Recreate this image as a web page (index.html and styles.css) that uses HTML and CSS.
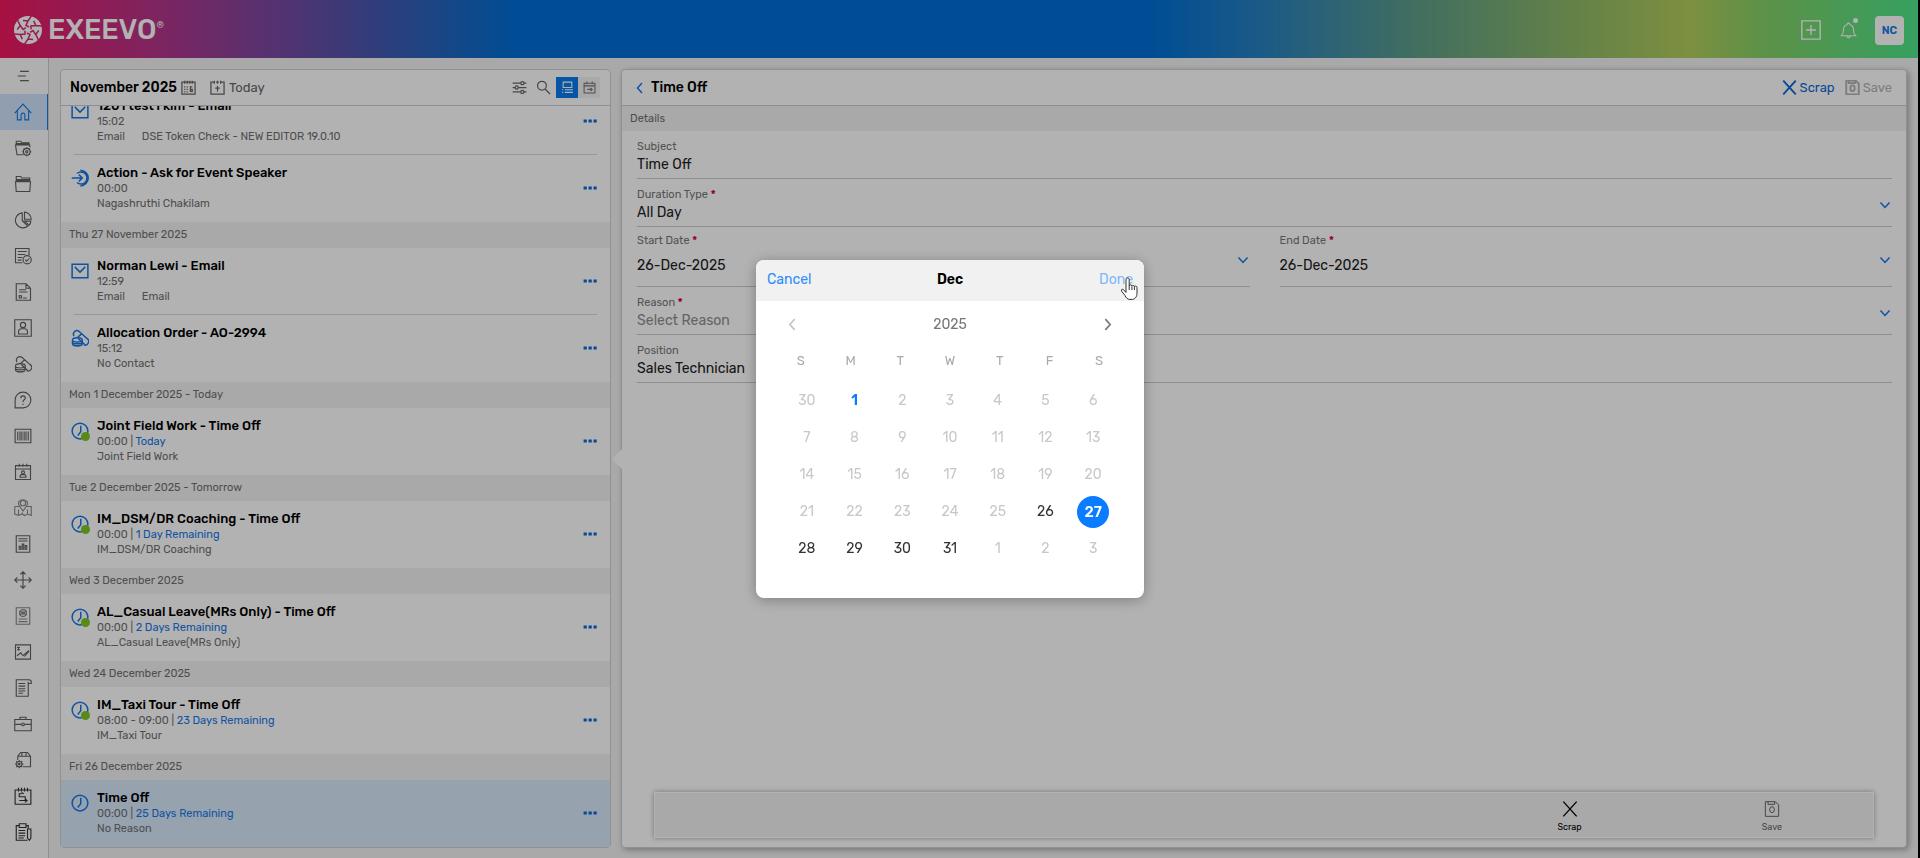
FILE: index.html
```html
<!DOCTYPE html>
<html lang="en">
<head>
    <meta charset="UTF-8">
    <meta name="viewport" content="width=device-width, initial-scale=1.0">
    <title>Exeevo - Time Off</title>
    <link rel="stylesheet" href="styles.css">
</head>
<body>
    <!-- icon set -->
    <svg class="sprite" aria-hidden="true">
        <symbol id="i-menu" viewBox="0 0 24 24"><path d="M7 4h15M3 12h14M7 20h15"/></symbol>
        <symbol id="i-home" viewBox="0 0 24 24"><path d="M1 13.500 12 1.500l11 12M4.500 10v12.500h5V16a2.500 2.500 0 0 1 5 0v6.500h5V10"/></symbol>
        <symbol id="i-folder-gear" viewBox="0 0 24 24"><path d="M12 21H4L2 8h19v3M3 8V3h6l1.500 2H20v3M3 6h17M3 7h17"/><circle cx="17" cy="17" r="4.500"/><circle cx="17" cy="17" r="1.500"/><path d="M17 11v2M17 21v2M11 17h2M21 17h2M12.800 12.800l1.400 1.400M19.800 19.800l1.400 1.400M12.800 21.200l1.400-1.400M19.800 14.200l1.400-1.400"/></symbol>
        <symbol id="i-folder" viewBox="0 0 24 24"><path d="M2 9h20l-1 13H3zM3 9V2h6l1.500 2H21v5M3 6h18M3 7.500h18"/></symbol>
        <symbol id="i-pie" viewBox="0 0 24 24"><path d="M11 2.500A10 10 0 1 0 18.500 20L11 13z"/><path d="M14 1.500V11h9A9.500 9.500 0 0 0 14 1.500zM14 13.500h8.500a9 9 0 0 1-2.500 5.500z"/></symbol>
        <symbol id="i-list-check" viewBox="0 0 24 24"><path d="M11 21H2V2h18v9M5 6h12M5 10h10M5 14h6M5 17.500h5"/><circle cx="17.500" cy="17" r="5.500"/><path d="m15 17 2 2 3.500-4"/></symbol>
        <symbol id="i-doc-sign" viewBox="0 0 24 24"><path d="M3 1h13l6 6v16H3zM16 1v6h6M7 9h9M7 12h11M7 16v4h3v-3H7M12 20h5"/></symbol>
        <symbol id="i-contact" viewBox="0 0 24 24"><path d="M1 1h22v22H1zM6 20v-3a4 4 0 0 1 4-4h4a4 4 0 0 1 4 4v3z"/><circle cx="12" cy="8" r="3.500"/></symbol>
        <symbol id="i-pills" viewBox="0 0 24 24"><path d="m10 13 8.500 8M4 9.500A4.700 4.700 0 0 1 10.500 3L21 12.500A4.700 4.700 0 0 1 17 21M8 12l6-5.500"/><path d="M2 14.500c0-4 13-4 13 0v5c0 4-13 4-13 0zM2 15c0 3 13 3 13 0M2 17.500c0 3 13 3 13 0M2 20c0 3 13 3 13 0"/></symbol>
        <symbol id="i-help" viewBox="0 0 24 24"><path d="M1.500 22.500V12A10.500 10.500 0 1 1 12 22.500zM9 9.500c0-4 6-4 6 0 0 2.200-3 2.300-3 5M12 17v1.500"/></symbol>
        <symbol id="i-barcode" viewBox="0 0 24 24"><path d="M1.500 3h21v18h-21zM5 6v12M8 6v12M10.500 6v12M13.500 6v12M16 6v12M19 6v12"/></symbol>
        <symbol id="i-cal-user" viewBox="0 0 24 24"><path d="M2 3.500h20V22H2zM2 8h20M7 1v4M12 1v4M17 1v4M8 19v-1a2.500 2.500 0 0 1 2.500-2.500h3A2.500 2.500 0 0 1 16 18v1z"/><circle cx="12" cy="12.500" r="2"/></symbol>
        <symbol id="i-map-user" viewBox="0 0 24 24"><circle cx="12" cy="5.500" r="3.500"/><path d="M7 9c-3-5 1-8 5-8s8 3 5 8l-5 7zM1 10h6M1 10v10l5 2 5-2 3 2 4-2 5 2V10h-6M6 14v8M11 18v3M18 14v6"/></symbol>
        <symbol id="i-report" viewBox="0 0 24 24"><path d="M3 1h18v22H3zM6 5h12M6 8h12M7 20v-5h2v5M11 20v-8h2v8M15 20v-6h2v6"/></symbol>
        <symbol id="i-move" viewBox="0 0 24 24"><path d="M12 1v22M1 12h22M8.500 4.500 12 1l3.500 3.500M8.500 19.500 12 23l3.500-3.500M4.500 8.500 1 12l3.500 3.500M19.500 8.500 23 12l-3.500 3.500"/></symbol>
        <symbol id="i-atom-doc" viewBox="0 0 24 24"><path d="M3 1h18v22H3zM6 16h12M6 19.500h12"/><circle cx="12" cy="8" r="4.500"/><circle cx="12" cy="8" r="1.500"/><path d="M7 5.500l10 5M7 10.500l10-5"/></symbol>
        <symbol id="i-chart" viewBox="0 0 24 24"><path d="M2 2.500h20v19H2zM4 6h4M4 9h4M6 5v5M4 17l5-4 3 4 8-7M14 18l6-7"/></symbol>
        <symbol id="i-scroll" viewBox="0 0 24 24"><path d="M3 1h17a3 3 0 0 1 3 3v2h-4v17H3zM19 6V3.500M6 6h9M6 9.500h9M6 13h9M6 16h9M6 19h6"/></symbol>
        <symbol id="i-case" viewBox="0 0 24 24"><path d="M1 6h22v15H1zM8 6V3h8v3M1 12.500h9M14 12.500h9"/><circle cx="12" cy="12.500" r="1.800"/></symbol>
        <symbol id="i-box-gear" viewBox="0 0 24 24"><path d="M5 12V7l4-5h9l4 5v14H12M5 7h17M10.500 2v5M16 2v5"/><circle cx="7" cy="17.500" r="3.500"/><circle cx="7" cy="17.500" r="1"/><path d="M7 12v2M7 21v2M1.500 17.500h2M10.500 17.500h2M3 13.500l1.500 1.500M9.500 20l1.500 1.500M3 21.500 4.500 20M9.500 15l1.500-1.500"/></symbol>
        <symbol id="i-cal-route" viewBox="0 0 24 24"><path d="M1.500 4h21v19h-21zM6 1v5M10 1v5M14 1v5M18 1v5M10 9H7v4h8v5H9M13 9l-3-1.500M7 18h10M14.500 15.500l3 2.500-3 2.500"/></symbol>
        <symbol id="i-clip" viewBox="0 0 24 24"><path d="M7 3.500H3V23h15M16 3.500h3V7M7 1h9v5H7zM6 10h9M6 13.500h9M6 17h9M6 20h7M18 8h4.500v12l-2 3-2.500-3z"/></symbol>
        <symbol id="i-mail" viewBox="0 0 24 24"><path d="M1.500 3h21v18h-21zM5 6.500l7 7 7-7"/></symbol>
        <symbol id="i-enter" viewBox="0 0 24 24"><path d="M1 12h14M10.500 7.500l4.500 4.500-4.500 4.500M8 6a8 8 0 1 1 0 12M12.500 1.500a10.500 10.500 0 0 1 0 21"/></symbol>
        <symbol id="i-clock" viewBox="0 0 24 24"><circle cx="12" cy="12" r="10.500"/><path d="M13 5v8l-4 5"/></symbol>
        <symbol id="i-dots" viewBox="0 0 24 24"><path d="M1 9.500h5.500v5H1zM9.500 9.500H15v5H9.500zM18 9.500h5.500v5H18z"/></symbol>
        <symbol id="i-cal" viewBox="0 0 24 24"><path d="M1.500 3.500h21v19h-21zM6 1v5M10 1v5M14 1v5M18 1v5M5 11h2M9 11h2M5 15h2M9 15h2M5 19h2M9 19h2M18 11h-3v7h3v-3h-3"/></symbol>
        <symbol id="i-cal-today" viewBox="0 0 24 24"><path d="M7 3.500H1.500v19h21v-19H17M10 3.500h4M7 1v5M12 1v5M17 1v5M12 9.500v9M8.500 13h7"/></symbol>
        <symbol id="i-sliders" viewBox="0 0 24 24"><path d="M1 5h13M19 5h4M1 12h4M10 12h13M1 19h13M19 19h4"/><circle cx="16.500" cy="5" r="2.500"/><circle cx="7.500" cy="12" r="2.500"/><circle cx="16.500" cy="19" r="2.500"/></symbol>
        <symbol id="i-search" viewBox="0 0 24 24"><circle cx="9.500" cy="9" r="7"/><path d="m14.500 14.500 8 8"/></symbol>
        <symbol id="i-agenda" viewBox="0 0 24 24"><path d="M4 2h16v10H4zM2 16h2M7 16h15M2 21h2M7 21h15"/></symbol>
        <symbol id="i-cal-next" viewBox="0 0 24 24"><path d="M2 4h20v18H2zM7 1v5M17 1v5M2 9h20M8 15.500h9M14 12.500l3 3-3 3"/></symbol>
        <symbol id="i-x" viewBox="0 0 24 24"><path d="m2 1 20 22M22 1 2 23"/></symbol>
        <symbol id="i-save" viewBox="0 0 24 24"><path d="M2 1h15l5 5v17H2zM6 1v4h10V1"/><ellipse cx="12" cy="13" rx="3.500" ry="4.500"/></symbol>
        <symbol id="i-down" viewBox="0 0 24 24"><path d="m3 7 9 10 9-10"/></symbol>
        <symbol id="i-left" viewBox="0 0 24 24"><path d="M16 2 7 12l9 10"/></symbol>
        <symbol id="i-right" viewBox="0 0 24 24"><path d="m8 2 9 10-9 10"/></symbol>
        <symbol id="i-plus-box" viewBox="0 0 24 24"><path d="M2 2h20v20H2zM12 6.500v11M6.500 12h11"/></symbol>
        <symbol id="i-bell" viewBox="0 0 24 24"><path d="M2 20c3-3 3-5 3-9a7 7 0 0 1 5-6.500c0-3 4-3 4 0A7 7 0 0 1 19 11c0 4 0 6 3 9zM9.500 20.500c0 3 5 3 5 0"/></symbol>
        <symbol id="brand-blade" viewBox="0 0 28 28"><path d="M18 0l-4 5-5-.500M14 5l-1.500 4.500 3 1.500"/></symbol>
    </svg>

    <div class="app">
        <header class="topbar">
            <a href="#" class="brand">
                <svg class="brand-mark" viewBox="0 0 28 28">
                    <circle cx="14" cy="14" r="14"/>
                    <g class="brand-cut">
                        <path id="blade" d="M18 -1l-4 6-5-.500M14 5l-2 4.500 3 1.500"/>
                        <use href="#blade" transform="rotate(60 14 14)"/>
                        <use href="#blade" transform="rotate(120 14 14)"/>
                        <use href="#blade" transform="rotate(180 14 14)"/>
                        <use href="#blade" transform="rotate(240 14 14)"/>
                        <use href="#blade" transform="rotate(300 14 14)"/>
                    </g>
                </svg>
                <span class="brand-name">EXEEVO</span><sup class="brand-reg">®</sup>
            </a>
            <div class="topbar-actions">
                <button class="top-btn" aria-label="Create"><svg class="icon icon-plus"><use href="#i-plus-box"/></svg></button>
                <button class="top-btn" aria-label="Notifications"><svg class="icon icon-bell"><use href="#i-bell"/></svg><span class="badge"></span></button>
                <button class="avatar">NC</button>
            </div>
        </header>

        <div class="workspace">
            <nav class="sidebar">
                <button class="side-toggle" aria-label="Menu"><svg class="icon"><use href="#i-menu"/></svg></button>
                <a href="#" class="side-link active" aria-label="Home"><svg class="icon"><use href="#i-home"/></svg></a>
                <a href="#" class="side-link" aria-label="Case settings"><svg class="icon"><use href="#i-folder-gear"/></svg></a>
                <a href="#" class="side-link" aria-label="Folders"><svg class="icon"><use href="#i-folder"/></svg></a>
                <a href="#" class="side-link" aria-label="Analytics"><svg class="icon"><use href="#i-pie"/></svg></a>
                <a href="#" class="side-link" aria-label="Surveys"><svg class="icon"><use href="#i-list-check"/></svg></a>
                <a href="#" class="side-link" aria-label="Contracts"><svg class="icon"><use href="#i-doc-sign"/></svg></a>
                <a href="#" class="side-link" aria-label="Contacts"><svg class="icon"><use href="#i-contact"/></svg></a>
                <a href="#" class="side-link" aria-label="Samples"><svg class="icon"><use href="#i-pills"/></svg></a>
                <a href="#" class="side-link" aria-label="Inquiries"><svg class="icon"><use href="#i-help"/></svg></a>
                <a href="#" class="side-link" aria-label="Products"><svg class="icon"><use href="#i-barcode"/></svg></a>
                <a href="#" class="side-link" aria-label="Appointments"><svg class="icon"><use href="#i-cal-user"/></svg></a>
                <a href="#" class="side-link faded" aria-label="Territory"><svg class="icon"><use href="#i-map-user"/></svg></a>
                <a href="#" class="side-link" aria-label="Reports"><svg class="icon"><use href="#i-report"/></svg></a>
                <a href="#" class="side-link" aria-label="Realign"><svg class="icon"><use href="#i-move"/></svg></a>
                <a href="#" class="side-link faded" aria-label="Profiles"><svg class="icon"><use href="#i-atom-doc"/></svg></a>
                <a href="#" class="side-link" aria-label="Trends"><svg class="icon"><use href="#i-chart"/></svg></a>
                <a href="#" class="side-link" aria-label="Notes"><svg class="icon"><use href="#i-scroll"/></svg></a>
                <a href="#" class="side-link" aria-label="Portfolio"><svg class="icon"><use href="#i-case"/></svg></a>
                <a href="#" class="side-link" aria-label="Inventory"><svg class="icon"><use href="#i-box-gear"/></svg></a>
                <a href="#" class="side-link dark" aria-label="Planner"><svg class="icon"><use href="#i-cal-route"/></svg></a>
                <a href="#" class="side-link dark" aria-label="Forms"><svg class="icon"><use href="#i-clip"/></svg></a>
            </nav>

            <main class="content">
                <section class="panel agenda">
                    <div class="panel-head">
                        <h2 class="panel-title">November 2025</h2>
                        <button class="tool" aria-label="Pick month"><svg class="icon icon-sm"><use href="#i-cal"/></svg></button>
                        <button class="tool tool-today"><svg class="icon icon-sm"><use href="#i-cal-today"/></svg>Today</button>
                        <div class="agenda-tools">
                            <button class="tool" aria-label="Filter"><svg class="icon icon-sm"><use href="#i-sliders"/></svg></button>
                            <button class="tool" aria-label="Search"><svg class="icon icon-sm"><use href="#i-search"/></svg></button>
                            <div class="view-switch">
                                <button class="view on" aria-label="Agenda view"><svg class="icon icon-sm"><use href="#i-agenda"/></svg></button>
                                <button class="view" aria-label="Calendar view"><svg class="icon icon-sm"><use href="#i-cal-next"/></svg></button>
                            </div>
                        </div>
                    </div>
                    <div class="agenda-list">
                        <article class="item ruled">
                            <svg class="icon item-icon"><use href="#i-mail"/></svg>
                            <div class="item-body">
                                <h3>1201 test1 kim - Email</h3>
                                <p>15:02</p>
                                <p class="item-sub"><span>Email</span><span>DSE Token Check - NEW EDITOR 19.0.10</span></p>
                            </div>
                            <button class="more" aria-label="More"><svg class="icon"><use href="#i-dots"/></svg></button>
                        </article>
                        <article class="item">
                            <svg class="icon item-icon"><use href="#i-enter"/></svg>
                            <div class="item-body">
                                <h3>Action - Ask for Event Speaker</h3>
                                <p>00:00</p>
                                <p class="item-sub">Nagashruthi Chakilam</p>
                            </div>
                            <button class="more" aria-label="More"><svg class="icon"><use href="#i-dots"/></svg></button>
                        </article>
                        <h4 class="day">Thu 27 November 2025</h4>
                        <article class="item ruled">
                            <svg class="icon item-icon"><use href="#i-mail"/></svg>
                            <div class="item-body">
                                <h3>Norman Lewi - Email</h3>
                                <p>12:59</p>
                                <p class="item-sub"><span>Email</span><span>Email</span></p>
                            </div>
                            <button class="more" aria-label="More"><svg class="icon"><use href="#i-dots"/></svg></button>
                        </article>
                        <article class="item">
                            <svg class="icon item-icon"><use href="#i-pills"/></svg>
                            <div class="item-body">
                                <h3>Allocation Order - AO-2994</h3>
                                <p>15:12</p>
                                <p class="item-sub">No Contact</p>
                            </div>
                            <button class="more" aria-label="More"><svg class="icon"><use href="#i-dots"/></svg></button>
                        </article>
                        <h4 class="day">Mon 1 December 2025 - Today</h4>
                        <article class="item">
                            <div class="item-icon clock"><svg class="icon"><use href="#i-clock"/></svg><span class="dot"></span></div>
                            <div class="item-body">
                                <h3>Joint Field Work - Time Off</h3>
                                <p>00:00 | <span class="due">Today</span></p>
                                <p class="item-sub">Joint Field Work</p>
                            </div>
                            <button class="more" aria-label="More"><svg class="icon"><use href="#i-dots"/></svg></button>
                        </article>
                        <h4 class="day">Tue 2 December 2025 - Tomorrow</h4>
                        <article class="item">
                            <div class="item-icon clock"><svg class="icon"><use href="#i-clock"/></svg><span class="dot"></span></div>
                            <div class="item-body">
                                <h3>IM_DSM/DR Coaching - Time Off</h3>
                                <p>00:00 | <span class="due">1 Day Remaining</span></p>
                                <p class="item-sub">IM_DSM/DR Coaching</p>
                            </div>
                            <button class="more" aria-label="More"><svg class="icon"><use href="#i-dots"/></svg></button>
                        </article>
                        <h4 class="day">Wed 3 December 2025</h4>
                        <article class="item">
                            <div class="item-icon clock"><svg class="icon"><use href="#i-clock"/></svg><span class="dot"></span></div>
                            <div class="item-body">
                                <h3>AL_Casual Leave(MRs Only) - Time Off</h3>
                                <p>00:00 | <span class="due">2 Days Remaining</span></p>
                                <p class="item-sub">AL_Casual Leave(MRs Only)</p>
                            </div>
                            <button class="more" aria-label="More"><svg class="icon"><use href="#i-dots"/></svg></button>
                        </article>
                        <h4 class="day">Wed 24 December 2025</h4>
                        <article class="item">
                            <div class="item-icon clock"><svg class="icon"><use href="#i-clock"/></svg><span class="dot"></span></div>
                            <div class="item-body">
                                <h3>IM_Taxi Tour - Time Off</h3>
                                <p>08:00 - 09:00 | <span class="due">23 Days Remaining</span></p>
                                <p class="item-sub">IM_Taxi Tour</p>
                            </div>
                            <button class="more" aria-label="More"><svg class="icon"><use href="#i-dots"/></svg></button>
                        </article>
                        <h4 class="day">Fri 26 December 2025</h4>
                        <article class="item selected">
                            <svg class="icon item-icon"><use href="#i-clock"/></svg>
                            <div class="item-body">
                                <h3>Time Off</h3>
                                <p>00:00 | <span class="due">25 Days Remaining</span></p>
                                <p class="item-sub">No Reason</p>
                            </div>
                            <button class="more" aria-label="More"><svg class="icon"><use href="#i-dots"/></svg></button>
                        </article>
                    </div>
                </section>

                <section class="panel detail">
                    <div class="panel-head">
                        <button class="back" aria-label="Back"><svg class="icon"><use href="#i-left"/></svg></button>
                        <h2 class="panel-title">Time Off</h2>
                        <div class="detail-tools">
                            <button class="cmd"><svg class="icon icon-sm"><use href="#i-x"/></svg>Scrap</button>
                            <button class="cmd" disabled><svg class="icon icon-sm"><use href="#i-save"/></svg>Save</button>
                        </div>
                    </div>
                    <h4 class="day">Details</h4>
                    <form class="form">
                        <div class="field">
                            <label for="subject">Subject</label>
                            <input type="text" id="subject" value="Time Off">
                        </div>
                        <div class="field">
                            <label for="duration">Duration Type <b>*</b></label>
                            <select id="duration"><option>All Day</option></select>
                            <svg class="icon chevron"><use href="#i-down"/></svg>
                        </div>
                        <div class="dates">
                            <div class="field tall">
                                <label for="start">Start Date <b>*</b></label>
                                <input type="text" id="start" value="26-Dec-2025">
                                <svg class="icon chevron"><use href="#i-down"/></svg>
                            </div>
                            <div class="field tall">
                                <label for="end">End Date <b>*</b></label>
                                <input type="text" id="end" value="26-Dec-2025">
                                <svg class="icon chevron"><use href="#i-down"/></svg>
                            </div>
                        </div>
                        <div class="field">
                            <label for="reason">Reason <b>*</b></label>
                            <select id="reason" class="empty"><option>Select Reason</option></select>
                            <svg class="icon chevron"><use href="#i-down"/></svg>
                        </div>
                        <div class="field">
                            <label for="position">Position</label>
                            <input type="text" id="position" value="Sales Technician">
                        </div>
                    </form>
                    <div class="action-bar">
                        <button class="action action-scrap"><svg class="icon"><use href="#i-x"/></svg>Scrap</button>
                        <button class="action" disabled><svg class="icon"><use href="#i-save"/></svg>Save</button>
                    </div>
                    <span class="pointer"></span>
                </section>
            </main>
        </div>
    </div>

    <!-- date picker -->
    <div class="overlay">
        <div class="picker" role="dialog" aria-label="Choose date">
            <div class="picker-head">
                <button class="picker-btn">Cancel</button>
                <h2>Dec</h2>
                <button class="picker-btn done">Done</button>
                <svg class="hand" viewBox="0 0 18 24"><path d="M6 15.500V2.500a1.600 1.600 0 0 1 3.200 0V9c0-1.500 2.600-1.500 2.700.200 0-1.200 2.500-1.200 2.500.600.200-1.200 2.600-1 2.600.700V16c0 4-2 6.500-6 6.500-3.500 0-5-1.500-6-4L1.500 14c-.600-1.500 1-2.500 2.200-1.200zM9.200 9v4M11.900 9.500v3.500M14.400 10v3"/></svg>
            </div>
            <div class="picker-year">
                <button class="nav prev" aria-label="Previous month"><svg class="icon"><use href="#i-left"/></svg></button>
                <span>2025</span>
                <button class="nav" aria-label="Next month"><svg class="icon"><use href="#i-right"/></svg></button>
            </div>
            <div class="weekdays">
                <span>S</span><span>M</span><span>T</span><span>W</span><span>T</span><span>F</span><span>S</span>
            </div>
            <div class="days">
                <button disabled>30</button><button class="now">1</button><button disabled>2</button><button disabled>3</button><button disabled>4</button><button disabled>5</button><button disabled>6</button>
                <button disabled>7</button><button disabled>8</button><button disabled>9</button><button disabled>10</button><button disabled>11</button><button disabled>12</button><button disabled>13</button>
                <button disabled>14</button><button disabled>15</button><button disabled>16</button><button disabled>17</button><button disabled>18</button><button disabled>19</button><button disabled>20</button>
                <button disabled>21</button><button disabled>22</button><button disabled>23</button><button disabled>24</button><button disabled>25</button><button>26</button><button class="picked">27</button>
                <button>28</button><button>29</button><button>30</button><button>31</button><button disabled>1</button><button disabled>2</button><button disabled>3</button>
            </div>
        </div>
    </div>
</body>
</html>
```
FILE: styles.css
```css
* {
    box-sizing: border-box;
}
body {
    margin: 0;
    height: 100vh;
    background: #000;
    padding-right: 2px;
    font-family: Rubik, Roboto, sans-serif;
    font-size: 11px;
    color: #000;
}
h2, h3, h4, p {
    margin: 0;
    font-weight: 500;
}
button, input, select {
    font: inherit;
    color: inherit;
    border: 0;
    background: none;
    padding: 0;
    margin: 0;
    outline: none;
}
.sprite {
    display: none;
}
.icon {
    width: 18px;
    height: 18px;
    fill: none;
    stroke: currentColor;
    stroke-width: 1.5;
    flex: none;
    display: block;
}
.icon-sm {
    width: 15px;
    height: 15px;
    stroke-width: 2;
}
.app {
    height: 100%;
    display: flex;
    flex-direction: column;
    background: #f3f3f3;
}

/* top bar */
.topbar {
    height: 58px;
    flex: none;
    display: flex;
    align-items: center;
    justify-content: space-between;
    padding: 2px 14px 0;
    color: #fff;
    background: linear-gradient(90deg, #f0185e 0%, #b6348a 8%, #7d47a0 14%, #4c56ae 19%, #1a68c2 24%, #006fd6 27%, #006fd6 60%, #2a82c0 66%, #5f9f88 74%, #8fba68 82%, #b4cd5c 88%, #85d168 92%, #4de58a 100%);
}
.brand {
    display: flex;
    align-items: center;
    color: #fff;
    text-decoration: none;
}
.brand-mark {
    width: 28px;
    height: 28px;
    fill: #fff;
}
.brand-cut {
    fill: none;
    stroke: #d82674;
    stroke-width: 1.5;
}
.brand-name {
    font-size: 28px;
    font-weight: 500;
    line-height: 28px;
    margin-left: 6px;
}
.brand-reg {
    font-size: 9px;
    line-height: 9px;
    margin-top: 5px;
    align-self: flex-start;
}
.topbar-actions {
    display: flex;
    align-items: center;
    gap: 18px;
}
.top-btn {
    position: relative;
    color: #fff;
}
.icon-plus {
    width: 22px;
    height: 22px;
}
.icon-bell {
    width: 17px;
    height: 18px;
}
.badge {
    position: absolute;
    top: -3px;
    right: -1px;
    width: 5px;
    height: 5px;
    border-radius: 50%;
    background: #fff;
}
.avatar {
    width: 29px;
    height: 29px;
    border-radius: 4px;
    background: #fff;
    color: #1678e8;
    font-size: 11px;
    font-weight: 600;
}

/* sidebar */
.workspace {
    flex: 1;
    display: flex;
    min-height: 0;
}
.sidebar {
    width: 49px;
    flex: none;
    background: #fbfbfb;
    border-right: 1px solid #ccc;
    overflow: hidden;
}
.side-toggle, .side-link {
    width: 100%;
    height: 36px;
    display: flex;
    align-items: center;
    justify-content: center;
    padding-right: 2px;
    color: #606060;
}
.side-toggle .icon {
    width: 14px;
    height: 14px;
    stroke-width: 2;
}
.side-link.active {
    color: #1678e8;
    background: #cfe3fb;
    border-right: 1px solid #1678e8;
}
.side-link.faded {
    color: #888;
}
.side-link.dark {
    color: #333;
}

/* panels */
.content {
    flex: 1;
    min-width: 0;
    display: grid;
    grid-template-columns: 3fr 7fr;
    gap: 10px;
    padding: 11px 11px 10px 11px;
}
.panel {
    min-width: 0;
    min-height: 0;
    display: flex;
    flex-direction: column;
    background: #fff;
    border: 1px solid #d0d0d0;
    border-radius: 4px;
}
.panel-head {
    height: 36px;
    flex: none;
    display: flex;
    align-items: center;
    padding: 0 14px 0 9px;
    border-bottom: 1px solid #ccc;
}
.agenda .panel-head {
    padding-right: 10px;
}
.panel-title {
    font-size: 14px;
}
.tool {
    display: flex;
    align-items: center;
    color: #666;
    margin-left: 4px;
}
.tool-today {
    gap: 4px;
    margin-left: 14px;
    font-size: 13px;
}
.agenda-tools {
    margin-left: auto;
    display: flex;
    align-items: center;
    gap: 5px;
}
.view-switch {
    display: flex;
}
.view {
    width: 22px;
    height: 21px;
    display: flex;
    align-items: center;
    justify-content: center;
    color: #777;
    background: #f3f3f3;
}
.view .icon {
    width: 13px;
    height: 13px;
}
.view.on {
    color: #fff;
    background: #0a7cf0;
}

/* agenda list, scrolled to the end */
.agenda-list {
    flex: 1;
    min-height: 0;
    overflow: hidden;
    display: flex;
    flex-direction: column;
    justify-content: flex-end;
}
.day {
    height: 26px;
    flex: none;
    padding-left: 8px;
    line-height: 26px;
    font-size: 11px;
    font-weight: 400;
    color: #707070;
    background: #f3f3f3;
}
.item {
    height: 67px;
    flex: none;
    display: flex;
    align-items: flex-start;
    padding: 9px 13px 0 10px;
    position: relative;
}
.item.ruled::after {
    content: "";
    position: absolute;
    left: 13px;
    right: 13px;
    bottom: 0;
    border-bottom: 1px solid #d8d8d8;
}
.item.selected {
    background: #d8e8fb;
}
.item-icon {
    width: 18px;
    height: 18px;
    margin-top: 5px;
    color: #1678e8;
    stroke-width: 2;
}
.item-icon .icon {
    stroke-width: 2;
}
.clock {
    position: relative;
}
.dot {
    position: absolute;
    right: -1px;
    bottom: -1px;
    width: 9px;
    height: 9px;
    border-radius: 50%;
    background: #7ec820;
}
.item-body {
    flex: 1;
    margin-left: 8px;
}
.item-body h3 {
    font-size: 13px;
    line-height: 17px;
}
.item-body p {
    font-size: 11px;
    line-height: 15px;
    font-weight: 400;
    color: #707070;
}
.item-sub {
    display: flex;
    gap: 17px;
}
.due {
    color: #1678e8;
}
.more {
    margin-top: 17px;
    color: #0a6ad8;
}
.more .icon {
    width: 14px;
    height: 14px;
    fill: currentColor;
    stroke: none;
}

/* detail form */
.detail {
    position: relative;
    box-shadow: 2px 2px 6px rgba(0,0,0,0.3);
}
.detail .day {
    height: 25px;
    line-height: 25px;
}
.back {
    color: #1678e8;
    margin: 0 5px 0 3px;
}
.back .icon {
    width: 12px;
    height: 12px;
    stroke-width: 3;
}
.detail-tools {
    margin-left: auto;
    display: flex;
    gap: 10px;
}
.cmd {
    display: flex;
    align-items: center;
    gap: 3px;
    font-size: 13px;
    color: #0a6ad8;
}
.cmd:disabled {
    color: #b4b4b4;
}
.cmd .icon {
    stroke-width: 3;
}
.form {
    padding: 0 14px 0 15px;
}
.field {
    height: 48px;
    display: flex;
    flex-direction: column;
    padding-top: 8px;
    border-bottom: 1px solid #ccc;
    position: relative;
}
.field label {
    line-height: 16px;
    color: #777;
}
.field b {
    color: #e0005a;
}
.field input, .field select {
    width: 100%;
    height: 18px;
    font-size: 14px;
    color: #222;
    appearance: none;
}
.field select.empty {
    color: #909090;
}
.field.tall {
    height: 60px;
    padding-top: 6px;
}
.field.tall input {
    height: 33px;
}
.chevron {
    position: absolute;
    right: 1px;
    top: 20px;
    width: 12px;
    height: 12px;
    stroke-width: 3;
    color: #1678e8;
    pointer-events: none;
}
.tall .chevron {
    top: 27px;
}
.dates {
    display: grid;
    grid-template-columns: 1fr 1fr;
    gap: 30px;
}
.action-bar {
    margin: auto 32px 9px 32px;
    height: 46px;
    padding-left: 4px;
    display: grid;
    grid-template-columns: repeat(6, 1fr);
    background: #f3f3f3;
    border: 1px solid #fff;
    box-shadow: 0 0 5px rgba(0,0,0,0.35);
}
.action {
    display: flex;
    flex-direction: column;
    align-items: center;
    justify-content: center;
    gap: 5px;
    padding-top: 2px;
    font-size: 9px;
    color: #666;
}
.action .icon {
    width: 16px;
    height: 16px;
}
.action-scrap {
    grid-column: 5;
    color: #000;
}
.action-scrap .icon {
    stroke-width: 2;
}
/* arrow on the left edge, points at the list */
.pointer {
    position: absolute;
    left: -7px;
    top: 382px;
    width: 14px;
    height: 14px;
    background: #fff;
    transform: rotate(45deg);
}

/* date picker */
.overlay {
    position: fixed;
    inset: 0;
    padding-right: 20px;
    display: flex;
    align-items: center;
    justify-content: center;
    background: rgba(0,0,0,0.3);
}
.picker {
    width: 388px;
    padding-bottom: 31px;
    background: #fff;
    border-radius: 8px;
    box-shadow: 0 2px 14px rgba(0,0,0,0.3);
}
.picker-head {
    height: 41px;
    display: grid;
    grid-template-columns: 1fr auto 1fr;
    align-items: center;
    padding: 0 11px 2px;
    border-radius: 8px 8px 0 0;
    background: #f1f1f1;
    position: relative;
}
.picker-head h2 {
    font-size: 14px;
    font-weight: 600;
}
.picker-btn {
    font-size: 14px;
    color: #2a8cff;
    justify-self: start;
}
.picker-btn.done {
    color: #80b8fb;
    justify-self: end;
}
.hand {
    position: absolute;
    right: 6px;
    top: 17px;
    width: 18px;
    height: 24px;
    fill: #fff;
    stroke: #333;
}
.picker-year {
    height: 46px;
    display: flex;
    align-items: center;
    justify-content: space-between;
    padding: 0 30px;
    font-size: 14px;
    color: #777;
}
.nav {
    color: #777;
}
.nav.prev {
    color: #c4c4c4;
}
.nav .icon {
    width: 13px;
    height: 13px;
    stroke-width: 3;
}
.weekdays, .days {
    display: grid;
    grid-template-columns: repeat(7, 1fr);
    text-align: center;
    font-size: 14px;
}
.weekdays {
    height: 35px;
    padding: 0 20px;
    font-size: 13px;
    line-height: 28px;
    color: #aaa;
}
.days {
    padding: 0 27px;
    grid-auto-rows: 37px;
    justify-items: center;
    align-items: center;
}
.days button {
    width: 32px;
    height: 32px;
    border-radius: 50%;
    color: #333;
}
.days button:disabled {
    color: #c8c8c8;
}
.days .now {
    color: #0a7cff;
    font-weight: 600;
}
.days .picked {
    color: #fff;
    font-size: 15px;
    font-weight: 500;
    background: #0a7cff;
}
```
